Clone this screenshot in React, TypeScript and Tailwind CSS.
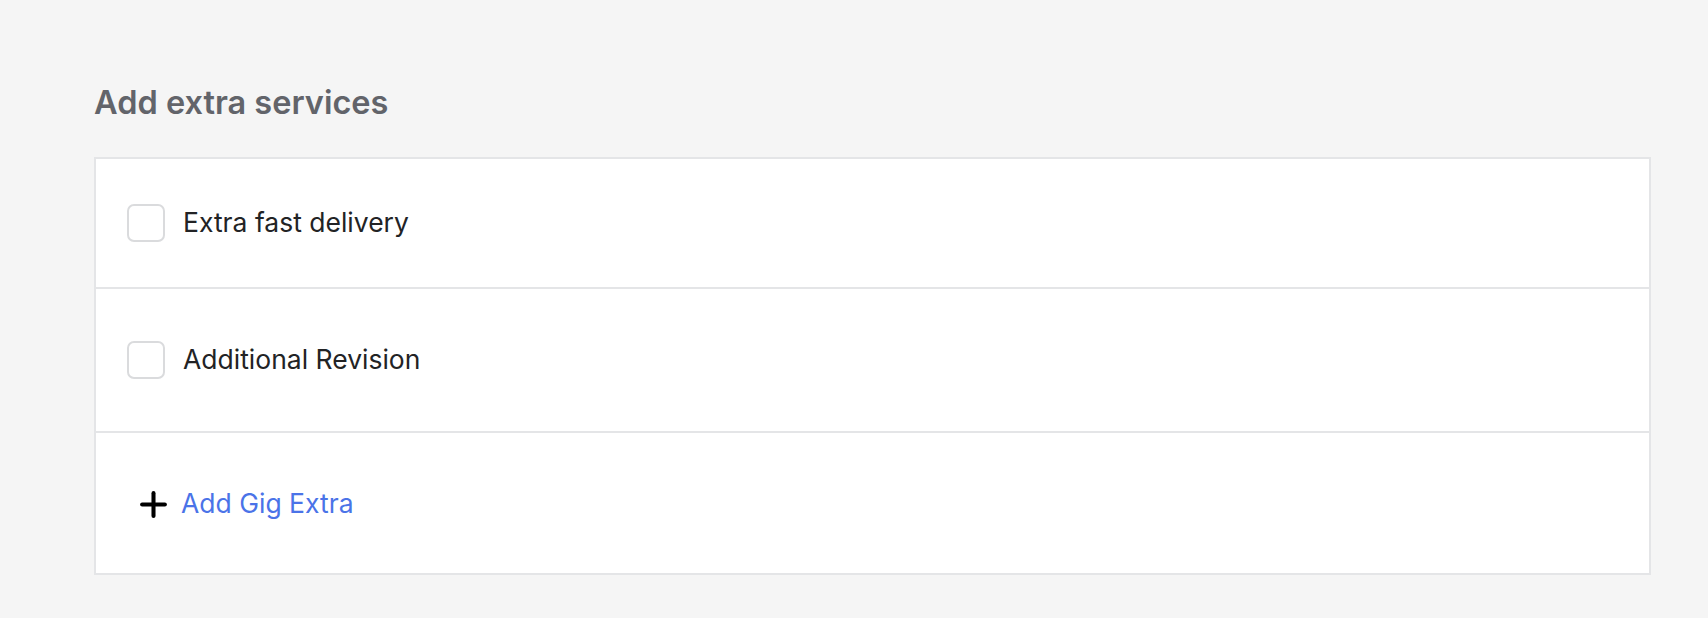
import { Plus } from "lucide-react";

const extras = [
  { id: "fast", label: "Extra fast delivery", row: "h-[130px]" },
  { id: "revision", label: "Additional Revision", row: "h-[144px]" },
];

export default function App() {
  return (
    <div className="min-h-screen bg-[#f5f5f5] pl-[94px] pr-[57px] pt-[83px] font-['Inter','Noto_Sans',sans-serif]">
      <h2 className="text-[32.5px] leading-[40px] font-semibold text-[#62646a] mb-[34px]">Add extra services</h2>

      <div className="bg-white border-2 border-[#e4e5e7]">
        {extras.map((item) => (
          <label
            key={item.id}
            className={`flex items-center gap-[18px] pl-[31px] border-b-2 border-[#e4e5e7] ${item.row}`}
          >
            <input type="checkbox" className="peer sr-only" />
            <span className="w-[38px] h-[38px] rounded-[7px] border-2 border-[#dadbdd] bg-white" />
            <span className="text-[26.5px] text-[#222325]">{item.label}</span>
          </label>
        ))}

        <div className="h-[140px] flex items-center pl-[38px] pt-[2px]">
          <button className="flex items-center gap-[8px] text-[26.5px] text-[#4a73e8]">
            <Plus size={39} strokeWidth={2.5} className="text-black" />
            Add Gig Extra
          </button>
        </div>
      </div>
    </div>
  );
}
